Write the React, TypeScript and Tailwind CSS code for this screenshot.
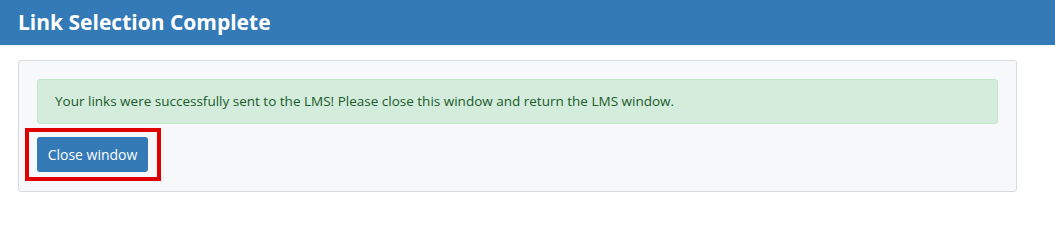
export default function App() {
  return (
    <div className="w-[1055px] h-[212px] bg-white font-['Open_Sans',sans-serif]">
      <div className="h-[45px] bg-[#337ab7] flex items-center px-[18px]">
        <h1 className="text-[21px] font-bold text-white">Link Selection Complete</h1>
      </div>
      <div className="pt-[15px] pl-[18px]">
        <div className="w-[999px] h-[132px] bg-[#f7f8fa] border border-[#d9dadc] rounded-[3px] px-[18px] pt-[18px]">
          <div className="h-[45px] bg-[#d4ecdb] border border-[#c3e6cb] rounded-[3px] flex items-center px-[17px] text-[13.5px] text-[#1b5a2c]">
            Your links were successfully sent to the LMS! Please close this window and return the LMS window.
          </div>
          <div className="relative mt-[13px] w-[111px]">
            <button className="w-[111px] h-[35px] bg-[#337ab7] rounded-[3px] text-white text-[14px]">
              Close window
            </button>
            <div className="absolute left-[-12px] top-[-9px] w-[136px] h-[53px] border-4 border-[#e00000]" />
          </div>
        </div>
      </div>
    </div>
  );
}
